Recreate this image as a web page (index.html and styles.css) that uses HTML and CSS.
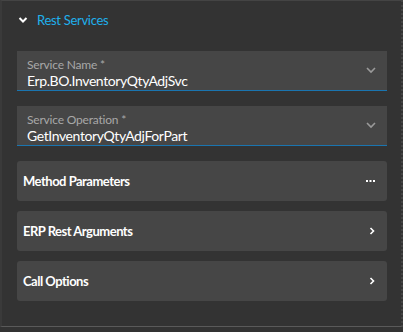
FILE: index.html
```html
<!DOCTYPE html>
<html lang="en">
  <head>
    <meta charset="UTF-8" />
    <meta name="viewport" content="width=device-width, initial-scale=1.0" />
    <title>Rest Services</title>
    <link rel="stylesheet" href="styles.css">
  </head>
  <body>
    <div class="panel">
      <div class="header">
        <svg class="caret" width="10" height="8" viewBox="0 0 10 8">
          <path d="M1.5 2 L5 5.5 L8.5 2" fill="none" stroke="#fff" stroke-width="2" />
        </svg>
        <span>Rest Services</span>
      </div>
      <div class="body">
        <div class="field">
          <div class="field-text">
            <label>Service Name *</label>
            <div class="value">Erp.BO.InventoryQtyAdjSvc</div>
          </div>
          <svg class="drop" width="12" height="8" viewBox="0 0 12 8">
            <path d="M2 2 L6 6 L10 2" fill="none" stroke="#9a9a9a" stroke-width="1.6" />
          </svg>
        </div>
        <div class="field">
          <div class="field-text">
            <label>Service Operation *</label>
            <div class="value">GetInventoryQtyAdjForPart</div>
          </div>
          <svg class="drop" width="12" height="8" viewBox="0 0 12 8">
            <path d="M2 2 L6 6 L10 2" fill="none" stroke="#9a9a9a" stroke-width="1.6" />
          </svg>
        </div>
        <div class="section">
          <span>Method Parameters</span>
          <svg width="9" height="4" viewBox="0 0 9 4">
            <rect x="0" y="1" width="2" height="2" fill="#fff" />
            <rect x="3.5" y="1" width="2" height="2" fill="#fff" />
            <rect x="7" y="1" width="2" height="2" fill="#fff" />
          </svg>
        </div>
        <div class="section">
          <span>ERP Rest Arguments</span>
          <svg width="6" height="8" viewBox="0 0 6 8">
            <path d="M1.5 1 L4.5 4 L1.5 7" fill="none" stroke="#fff" stroke-width="1.6" />
          </svg>
        </div>
        <div class="section">
          <span>Call Options</span>
          <svg width="6" height="8" viewBox="0 0 6 8">
            <path d="M1.5 1 L4.5 4 L1.5 7" fill="none" stroke="#fff" stroke-width="1.6" />
          </svg>
        </div>
      </div>
    </div>
  </body>
</html>
```

FILE: styles.css
```css
html,
body {
  margin: 0;
  background: #333333;
}
.panel {
  height: 327px;
  border-top: 1px solid #444444;
  border-left: 2px solid #3a3a3a;
  border-right: 2px dotted #444444;
  border-bottom: 1px solid #5a5a5a;
  box-sizing: border-box;
  width: 403px;
  font-family: Lato, "Liberation Sans", sans-serif;
  color: #ffffff;
}
.header {
  display: flex;
  align-items: center;
  height: 38px;
  padding-left: 16px;
}
.header .caret {
  margin-right: 9px;
}
.header span {
  color: #1fb0ec;
  font-size: 13px;
  letter-spacing: -0.3px;
}
.body {
  display: flex;
  flex-direction: column;
  gap: 10px;
  padding: 12px 14px 0 15px;
}
.field {
  display: flex;
  align-items: center;
  height: 40px;
  background: #464646;
  border-bottom: 1px solid #1a75b0;
  box-sizing: border-box;
  padding: 0 10px;
  margin-bottom: 5px;
}
.field-text {
  flex: 1;
  padding-top: 5px;
}
.field label {
  display: block;
  font-size: 12px;
  color: #a8a8a8;
  line-height: 15px;
  letter-spacing: -0.2px;
}
.field .value {
  font-size: 14px;
  line-height: 18px;
  color: #ffffff;
  letter-spacing: -0.4px;
}
.drop {
  margin-top: -2px;
}
.section {
  display: flex;
  align-items: center;
  justify-content: space-between;
  height: 40px;
  background: #464646;
  border-radius: 3px;
  padding: 0 12px 0 6px;
  font-size: 13px;
  font-weight: bold;
  letter-spacing: -0.5px;
}
```
